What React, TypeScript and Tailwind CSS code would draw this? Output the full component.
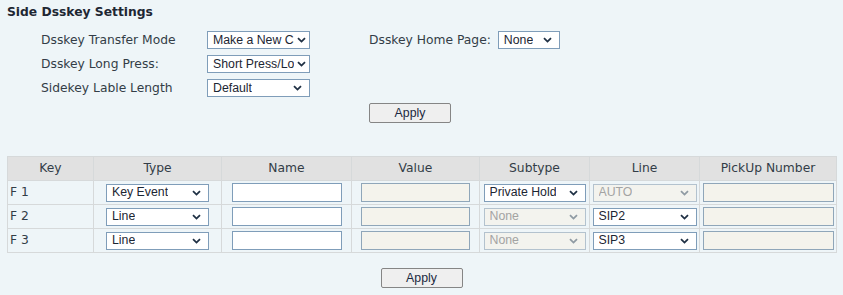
import clsx from "clsx";

const label = "font-['DejaVu_Sans',sans-serif] text-[12.3px] text-[#333d47]";
const field = "font-['Liberation_Sans',Arial,sans-serif] text-[12.3px]";

function Chevron({ disabled }: { disabled?: boolean }) {
  return (
    <svg width="9" height="6" viewBox="0 0 9 6" className="shrink-0">
      <path
        d="M1 1.2 L4.5 4.6 L8 1.2"
        fill="none"
        stroke={disabled ? "#8f9aa3" : "#1f3044"}
        strokeWidth="1.8"
      />
    </svg>
  );
}

function Select({
  value,
  className,
  disabled,
  tight,
}: {
  value: string;
  className: string;
  disabled?: boolean;
  tight?: boolean;
}) {
  return (
    <div
      className={clsx(
        field,
        "flex h-[18px] shrink-0 items-center justify-between border pl-[5px] text-left leading-none",
        tight ? "pr-[3px]" : "pr-[7px]",
        disabled
          ? "border-[#b3c2ce] bg-[#f3f3ee] text-[#a3a3a3]"
          : "border-[#7f9db9] bg-white text-[#1c2633]",
        className
      )}
    >
      <span className="mr-[3px] min-w-0 overflow-hidden whitespace-nowrap">{value}</span>
      <Chevron disabled={disabled} />
    </div>
  );
}

function Input({ className, disabled }: { className: string; disabled?: boolean }) {
  return (
    <div
      className={clsx(
        "h-[19px] shrink-0 border",
        disabled ? "border-[#8fa6b9] bg-[#f4f3ec]" : "border-[#7f9db9] bg-white",
        className
      )}
    />
  );
}

function Button() {
  return (
    <button
      type="button"
      className={clsx(
        field,
        "block h-[20px] w-[82px] rounded-[2px] border border-[#858585] bg-[#efefef] text-[#1b2940] leading-none"
      )}
    >
      Apply
    </button>
  );
}

const rows = [
  { key: "F 1", type: "Key Event", subtype: "Private Hold", subDisabled: false, line: "AUTO", lineDisabled: true },
  { key: "F 2", type: "Line", subtype: "None", subDisabled: true, line: "SIP2", lineDisabled: false },
  { key: "F 3", type: "Line", subtype: "None", subDisabled: true, line: "SIP3", lineDisabled: false },
];

const headers = [
  { name: "Key", w: "w-[86px]" },
  { name: "Type", w: "w-[128px]" },
  { name: "Name", w: "w-[130px]" },
  { name: "Value", w: "w-[128px]" },
  { name: "Subtype", w: "w-[110px]" },
  { name: "Line", w: "w-[110px]" },
  { name: "PickUp Number", w: "w-[137px]" },
];

const cell = "border border-[#d6d9da] p-0";
const inner = "flex h-[23px] items-center justify-center";

export default function App() {
  return (
    <div className="h-[295px] w-[843px] overflow-hidden bg-[#eef5f8] pt-[4px]">
      <h1 className="pl-[7px] font-['DejaVu_Sans',sans-serif] text-[12.3px] font-bold leading-[16px] text-[#1e2733]">
        Side Dsskey Settings
      </h1>

      <div className="mt-[8px] flex pl-[41px]">
        <div className="flex flex-col">
          <div className="flex h-[24px] items-center">
            <span className={clsx(label, "w-[166px]")}>Dsskey Transfer Mode</span>
            <Select value="Make a New Call" className="w-[103px]" tight />
          </div>
          <div className="flex h-[24px] items-center">
            <span className={clsx(label, "w-[166px]")}>Dsskey Long Press:</span>
            <Select value="Short Press/Long Press" className="w-[103px]" tight />
          </div>
          <div className="flex h-[24px] items-center">
            <span className={clsx(label, "w-[166px]")}>Sidekey Lable Length</span>
            <Select value="Default" className="w-[103px]" />
          </div>
        </div>
        <div className="ml-[59px] flex h-[24px] items-center gap-[7px]">
          <span className={label}>Dsskey Home Page:</span>
          <Select value="None" className="w-[62px]" />
        </div>
      </div>

      <div className="mt-[3px] flex pl-[369px]">
        <Button />
      </div>

      <table className="ml-[7px] mt-[33px] table-fixed border-collapse">
        <thead>
          <tr className="bg-[#e1e1e1]">
            {headers.map((h) => (
              <th key={h.name} className={clsx(label, h.w, cell, "font-normal")}>
                <div className={inner}>{h.name}</div>
              </th>
            ))}
          </tr>
        </thead>
        <tbody>
          {rows.map((r) => (
            <tr key={r.key}>
              <td className={clsx(label, cell)}>
                <div className="flex h-[23px] items-center pl-[2px]">{r.key}</div>
              </td>
              <td className={cell}>
                <div className={inner}>
                  <Select value={r.type} className="w-[103px]" />
                </div>
              </td>
              <td className={cell}>
                <div className={inner}>
                  <Input className="w-[110px]" />
                </div>
              </td>
              <td className={cell}>
                <div className={inner}>
                  <Input className="w-[109px]" disabled />
                </div>
              </td>
              <td className={cell}>
                <div className={inner}>
                  <Select value={r.subtype} className="w-[102px]" disabled={r.subDisabled} />
                </div>
              </td>
              <td className={cell}>
                <div className={inner}>
                  <Select value={r.line} className="w-[104px]" disabled={r.lineDisabled} />
                </div>
              </td>
              <td className={cell}>
                <div className={inner}>
                  <Input className="w-[131px]" disabled />
                </div>
              </td>
            </tr>
          ))}
        </tbody>
      </table>

      <div className="mt-[15px] flex justify-center">
        <Button />
      </div>
    </div>
  );
}
